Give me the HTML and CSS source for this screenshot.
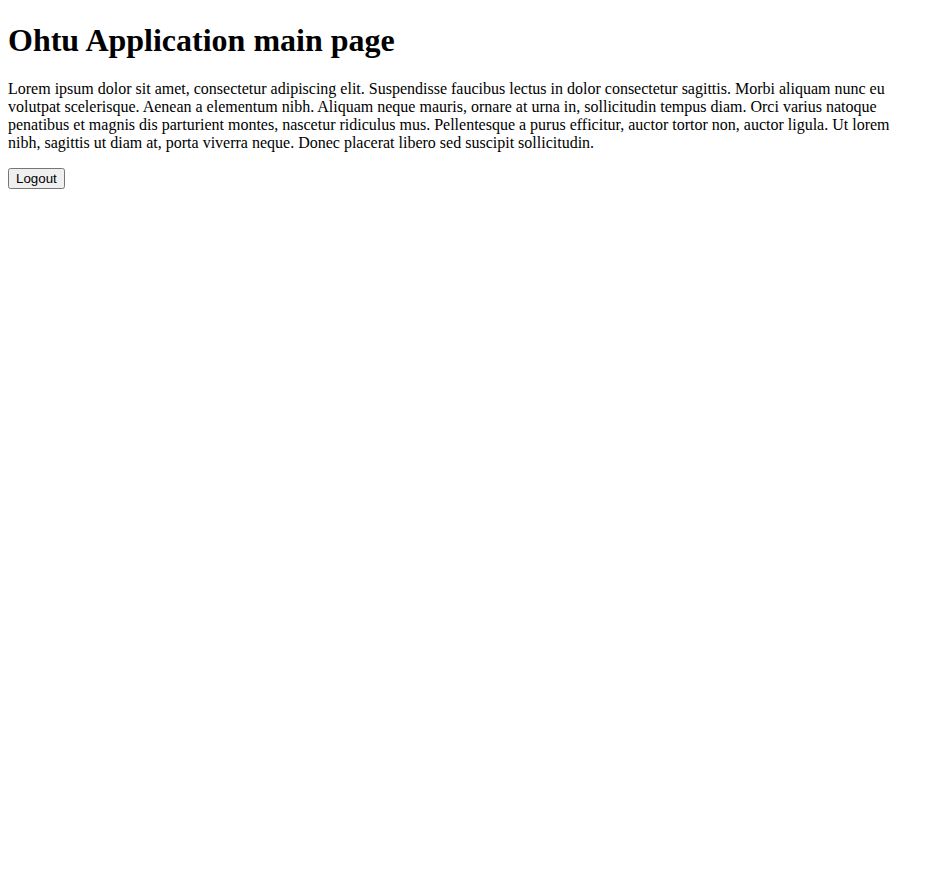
FILE: index.html
```html
<!DOCTYPE html>
<html>
<head>
<meta charset="utf-8">
<title>Ohtu Application</title>
<link rel="stylesheet" href="styles.css">
</head>
<body class="page">
<h1 class="title">Ohtu Application main page</h1>
<p class="text">Lorem ipsum dolor sit amet, consectetur adipiscing elit. Suspendisse faucibus lectus in dolor consectetur sagittis. Morbi aliquam nunc eu volutpat scelerisque. Aenean a elementum nibh. Aliquam neque mauris, ornare at urna in, sollicitudin tempus diam. Orci varius natoque penatibus et magnis dis parturient montes, nascetur ridiculus mus. Pellentesque a purus efficitur, auctor tortor non, auctor ligula. Ut lorem nibh, sagittis ut diam at, porta viverra neque. Donec placerat libero sed suscipit sollicitudin.</p>
<form class="logout-form">
<button type="button" class="logout">Logout</button>
</form>
</body>
</html>
```
FILE: styles.css
```css
.page {
  margin: 8px;
  font-family: "Liberation Serif", "Times New Roman", serif;
  font-size: 16px;
  color: #000;
  background: #fff;
}
.title {
  font-size: 32px;
  font-weight: bold;
  margin: 14px 0 21px;
}
.text {
  margin: 16px 0;
}
.logout {
  font-family: "Liberation Sans", Arial, sans-serif;
  font-size: 13.333px;
}
```
